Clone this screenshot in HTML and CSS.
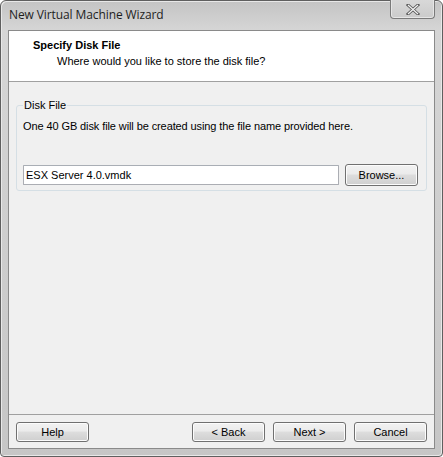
FILE: index.html
```html
<!DOCTYPE html>
<html>
<head>
<meta charset="utf-8">
<link rel="stylesheet" href="styles.css">
</head>
<body>
<div class="window">
  <div class="titlebar">
    <span class="title">New Virtual Machine Wizard</span>
    <div class="close"><svg width="14" height="11" viewBox="0 0 14 11"><path d="M2 1 L12 10 M12 1 L2 10" stroke="#5a5a5a" stroke-width="3" stroke-linecap="square"/><path d="M2 1 L12 10 M12 1 L2 10" stroke="#f4f4f4" stroke-width="1.2"/></svg></div>
  </div>
  <div class="client">
    <div class="header">
      <div class="h-title">Specify Disk File</div>
      <div class="h-sub">Where would you like to store the disk file?</div>
    </div>
    <div class="body">
      <fieldset class="group">
        <legend>Disk File</legend>
        <p class="desc">One 40 GB disk file will be created using the file name provided here.</p>
        <div class="row">
          <div class="input">ESX Server 4.0.vmdk</div>
          <div class="btn browse">Browse...</div>
        </div>
      </fieldset>
    </div>
    <div class="footer">
      <div class="btn">Help</div>
      <div class="spacer"></div>
      <div class="btn">&lt; Back</div>
      <div class="btn">Next &gt;</div>
      <div class="btn">Cancel</div>
    </div>
  </div>
</div>
</body>
</html>
```
FILE: styles.css
```css
html, body { margin: 0; padding: 0; background: #ffffff; }
body { width: 443px; height: 457px; overflow: hidden; font-family: "Liberation Sans", Arial, sans-serif; font-size: 11px; color: #000; }
.window {
  box-sizing: border-box; width: 443px; height: 457px;
  border: 1px solid #5f5f5f; border-radius: 6px 6px 4px 4px;
  background: linear-gradient(to bottom, #c4c4c4 0px, #d6d6d6 30px, #cfcfcf 200px, #c6c6c6 457px);
  box-shadow: inset 1px 1px 0 #e8e8e8, inset -1px -1px 0 #e8e8e8;
  display: flex; flex-direction: column; padding: 0 7px 7px 7px;
}
.titlebar { height: 29px; display: flex; align-items: flex-start; position: relative; }
.title { font-family: "Open Sans", "Liberation Sans", sans-serif; font-size: 12px; color: #1e1e1e; margin-top: 5px; margin-left: 1px; letter-spacing: -0.1px; }
.close {
  position: absolute; right: 0; top: -1px; width: 45px; height: 19px;
  border: 1px solid #7a7a7a; border-top: none; border-radius: 0 0 4px 4px;
  background: linear-gradient(#d8d8d8, #cbcbcb);
  box-shadow: inset 0 -1px 0 #e6e6e6, inset 1px 0 0 #e6e6e6, inset -1px 0 0 #e6e6e6;
  display: flex; align-items: center; justify-content: center; box-sizing: border-box;
}
.client {
  flex: 1; border: 1px solid #8a8a8a; background: #f0f0f0;
  display: flex; flex-direction: column;
}
.header { background: #ffffff; height: 51px; border-bottom: 1px solid #a0a0a0; box-sizing: border-box; }
.h-title { font-weight: bold; margin: 7px 0 0 24px; font-size: 11px; line-height: 14px; }
.h-sub { margin: 2px 0 0 48px; line-height: 14px; }
.body { flex: 1; padding: 17px 7px 0 7px; }
.group {
  margin: 0; padding: 4px 8px 0 6px; height: 92px; box-sizing: border-box;
  border: 1px solid #d5dfe5; border-radius: 3px;
}
.group legend { padding: 0 1px; margin-left: 0; line-height: 12px; }
.desc { margin: 4px 0 0 0; line-height: 14px; letter-spacing: -0.1px; }
.row { display: flex; margin-top: 31px; gap: 6px; align-items: center; }
.input {
  flex: 1; height: 20px; box-sizing: border-box; background: #fff;
  border: 1px solid #abadb3; border-top-color: #a9aeb5; border-radius: 1px;
  padding: 2px 2px; line-height: 14px;
}
.btn {
  box-sizing: border-box; width: 73px; height: 21px; text-align: center; line-height: 19px;
  border: 1px solid #707070; border-radius: 3px;
  background: linear-gradient(to bottom, #f2f2f2 0%, #ebebeb 45%, #dddddd 50%, #cfcfcf 100%);
  box-shadow: inset 0 0 0 1px #fcfcfc;
}
.browse { height: 22px; line-height: 20px; }
.footer {
  height: 34px; border-top: 1px solid #a0a0a0; box-sizing: border-box;
  display: flex; padding: 7px 7px 0 7px; gap: 8px;
}
.footer .btn { height: 20px; line-height: 18px; }
.spacer { flex: 1; }
```
